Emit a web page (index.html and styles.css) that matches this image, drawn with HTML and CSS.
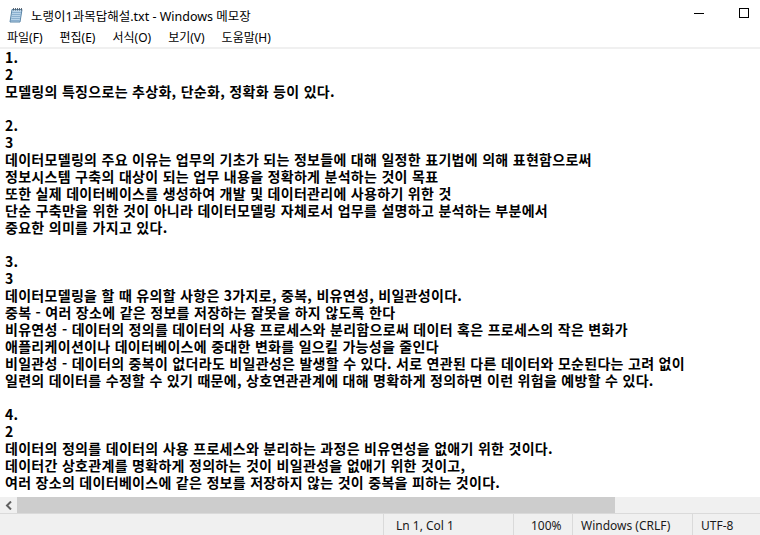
FILE: index.html
```html
<!DOCTYPE html>
<html lang="ko">

<head>
    <meta charset="UTF-8" />
    <title>노랭이1과목답해설.txt - Windows 메모장</title>
    <link rel="stylesheet" href="styles.css">
</head>

<body>
    <div class="window">
        <div class="titlebar">
            <svg class="app-icon" width="16" height="16" viewBox="0 0 16 16">
                <path d="M4 2.5 L14 2.5 L12 15 L2 15 Z" fill="#b9d4ea" stroke="#5b86a8" stroke-width="1" />
                <path d="M4.2 5.5 L12.8 5.5 M3.9 7.5 L12.5 7.5 M3.6 9.5 L12.2 9.5 M3.3 11.5 L11.9 11.5 M3 13.5 L11.6 13.5" stroke="#7fa6c6" stroke-width="0.8" />
                <path d="M5.5 1 L5.5 3.5 M7.5 1 L7.5 3.5 M9.5 1 L9.5 3.5 M11.5 1 L11.5 3.5 M13.5 1 L13.5 3.5" stroke="#505a66" stroke-width="0.9" />
            </svg>
            <span class="title">노랭이1과목답해설.txt - Windows 메모장</span>
            <div class="controls">
                <span class="ctrl min"></span>
                <span class="ctrl max"></span>
            </div>
        </div>

        <nav class="menubar">
            <span>파일(F)</span>
            <span>편집(E)</span>
            <span>서식(O)</span>
            <span>보기(V)</span>
            <span>도움말(H)</span>
        </nav>

        <div class="editor"><pre>1.
2
모델링의 특징으로는 추상화, 단순화, 정확화 등이 있다.

2.
3
데이터모델링의 주요 이유는 업무의 기초가 되는 정보들에 대해 일정한 표기법에 의해 표현함으로써
정보시스템 구축의 대상이 되는 업무 내용을 정확하게 분석하는 것이 목표
또한 실제 데이터베이스를 생성하여 개발 및 데이터관리에 사용하기 위한 것
단순 구축만을 위한 것이 아니라 데이터모델링 자체로서 업무를 설명하고 분석하는 부분에서
중요한 의미를 가지고 있다.

3.
3
데이터모델링을 할 때 유의할 사항은 3가지로, 중복, 비유연성, 비일관성이다.
중복 - 여러 장소에 같은 정보를 저장하는 잘못을 하지 않도록 한다
비유연성 - 데이터의 정의를 데이터의 사용 프로세스와 분리함으로써 데이터 혹은 프로세스의 작은 변화가
애플리케이션이나 데이터베이스에 중대한 변화를 일으킬 가능성을 줄인다
비일관성 - 데이터의 중복이 없더라도 비일관성은 발생할 수 있다. 서로 연관된 다른 데이터와 모순된다는 고려 없이
일련의 데이터를 수정할 수 있기 때문에, 상호연관관계에 대해 명확하게 정의하면 이런 위험을 예방할 수 있다.

4.
2
데이터의 정의를 데이터의 사용 프로세스와 분리하는 과정은 비유연성을 없애기 위한 것이다.
데이터간 상호관계를 명확하게 정의하는 것이 비일관성을 없애기 위한 것이고,
여러 장소의 데이터베이스에 같은 정보를 저장하지 않는 것이 중복을 피하는 것이다.</pre></div>

        <div class="hscroll">
            <span class="arrow">
                <svg width="8" height="9" viewBox="0 0 8 9">
                    <path d="M6 0.5 L2 4.5 L6 8.5" fill="none" stroke="#606060" stroke-width="2" />
                </svg>
            </span>
            <span class="thumb"></span>
        </div>

        <div class="statusbar">
            <span class="cell spacer"></span>
            <span class="cell pos">Ln 1, Col 1</span>
            <span class="cell zoom">100%</span>
            <span class="cell eol">Windows (CRLF)</span>
            <span class="cell enc">UTF-8</span>
        </div>
    </div>
</body>

</html>
```

FILE: styles.css
```css
* {
    box-sizing: border-box;
}

body {
    margin: 0;
    background: #fff;
    font-family: "Noto Sans", "Noto Sans CJK KR", sans-serif;
    color: #000;
    overflow: hidden;
}

.window {
    width: 760px;
    height: 535px;
    display: flex;
    flex-direction: column;
    overflow: hidden;
}

.titlebar {
    height: 31px;
    display: flex;
    align-items: center;
    padding-left: 8px;
    flex-shrink: 0;
}

.app-icon {
    margin-right: 7px;
    margin-top: -2px;
}

.title {
    font-size: 12.5px;
    color: #000;
    margin-top: -1px;
}

.controls {
    margin-left: auto;
    display: flex;
    align-items: center;
    height: 100%;
}

.ctrl {
    display: block;
}

.min {
    width: 10px;
    height: 1px;
    background: #000;
    margin-right: 35px;
    margin-top: -5px;
}

.max {
    width: 10px;
    height: 10px;
    border: 1px solid #000;
    margin-right: 11px;
    margin-top: -5px;
}

.menubar {
    height: 16px;
    display: flex;
    padding-left: 7px;
    font-size: 12px;
    flex-shrink: 0;
}

.menubar span {
    line-height: 16px;
    margin-right: 17px;
    margin-top: -1px;
}

.editor {
    flex: 1;
    border-top: 2px solid #f0f0f0;
    overflow: hidden;
}

.editor pre {
    margin: 0;
    padding: 0 0 0 5px;
    font-family: "Noto Sans CJK KR", sans-serif;
    font-weight: 700;
    font-size: 14px;
    letter-spacing: 0.3px;
    line-height: 17px;
    white-space: pre;
}

.hscroll {
    height: 16px;
    background: #f0f0f0;
    display: flex;
    flex-shrink: 0;
}

.hscroll .arrow {
    width: 17px;
    display: flex;
    align-items: center;
    justify-content: center;
}

.hscroll .thumb {
    width: 598px;
    background: #cdcdcd;
}

.statusbar {
    height: 22px;
    background: #f0f0f0;
    border-top: 1px solid #dadada;
    display: flex;
    font-size: 12px;
    color: #1a1a1a;
    flex-shrink: 0;
}

.cell {
    border-left: 1px solid #dadada;
    padding-left: 12px;
    padding-top: 2px;
    line-height: 20px;
}

.spacer {
    width: 383px;
    border-left: none;
}

.pos {
    width: 130px;
}

.zoom {
    width: 59px;
    padding-left: 17px;
}

.eol {
    width: 120px;
    padding-left: 8px;
}

.enc {
    flex: 1;
    padding-left: 8px;
}
```
